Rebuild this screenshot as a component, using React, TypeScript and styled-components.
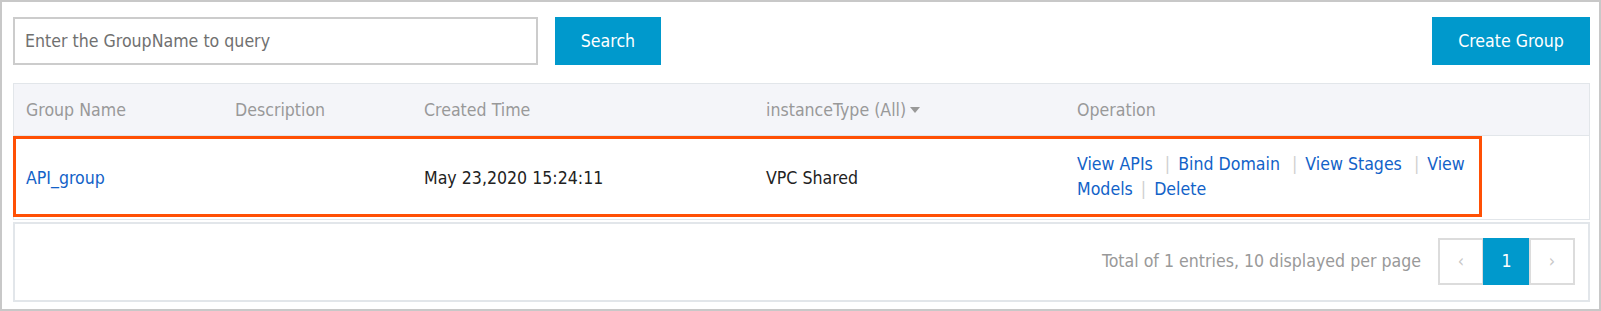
import React from 'react';
import styled, { createGlobalStyle } from 'styled-components';

const GlobalStyle = createGlobalStyle`
  body {
    margin: 0;
    font-family: "DejaVu Sans Condensed", "Liberation Sans", sans-serif;
    background: #fff;
  }
`;

const Frame = styled.div`
  box-sizing: border-box;
  width: 1601px;
  height: 311px;
  border: 2px solid #c8c8c8;
  padding: 15px 9px 0 11px;
  display: flex;
  flex-direction: column;
`;

const Toolbar = styled.div`
  display: flex;
  align-items: center;
  height: 48px;
`;

const SearchInput = styled.input`
  box-sizing: border-box;
  width: 525px;
  height: 48px;
  border: 2px solid #cccccc;
  padding: 0 10px;
  font-family: inherit;
  font-size: 17.6px;
  color: #333;
  outline: none;
  &::placeholder {
    color: #707070;
  }
`;

const Button = styled.button<{ $width: number; $push?: boolean }>`
  box-sizing: border-box;
  width: ${(p) => p.$width}px;
  height: 48px;
  margin-left: ${(p) => (p.$push ? 'auto' : '17px')};
  border: none;
  background: #0099cc;
  color: #fff;
  font-family: inherit;
  font-size: 17.6px;
  cursor: pointer;
`;

const Table = styled.div`
  margin-top: 18px;
  border: 1px solid #e2e6ea;
`;

const cols = '209px 189px 342px 311px 416px 1fr';

const HeaderRow = styled.div`
  display: grid;
  grid-template-columns: ${cols};
  height: 51px;
  background: #f4f5f9;
  border-bottom: 1px solid #e2e6ea;
  align-items: center;
`;

const HeadCell = styled.div`
  padding-left: 12px;
  font-size: 17.6px;
  color: #999;
  display: flex;
  align-items: center;
`;

const Caret = styled.span`
  width: 0;
  height: 0;
  margin-left: 4px;
  border-left: 5px solid transparent;
  border-right: 5px solid transparent;
  border-top: 6px solid #999;
`;

const BodyRow = styled.div`
  position: relative;
  display: grid;
  grid-template-columns: ${cols};
  height: 83px;
  align-items: center;
`;

const Cell = styled.div`
  padding-left: 12px;
  font-size: 17.6px;
  color: #222;
`;

const OpCell = styled(Cell)`
  line-height: 25px;
  padding-right: 2px;
  padding-bottom: 2px;
`;

const Link = styled.a`
  color: #1262c8;
  text-decoration: none;
  cursor: pointer;
`;

const Sep = styled.span<{ $wide?: boolean }>`
  color: #d0d0d0;
  margin: 0 8px 0 ${(p) => (p.$wide ? '12px' : '8px')};
`;

const Highlight = styled.div`
  position: absolute;
  left: -1px;
  top: 0;
  width: 1469px;
  height: 81px;
  box-sizing: border-box;
  border: 3px solid #ff5005;
  pointer-events: none;
`;

const Footer = styled.div`
  margin-top: 2px;
  height: 80px;
  box-sizing: border-box;
  border: 2px solid #e2e6ea;
  display: flex;
  align-items: center;
  justify-content: flex-end;
  padding: 0 13px 2px 0;
`;

const Summary = styled.span`
  font-size: 17.6px;
  color: #999;
  margin-right: 17px;
`;

const Pager = styled.div`
  display: flex;
`;

const PageBtn = styled.div<{ $active?: boolean }>`
  box-sizing: border-box;
  width: ${(p) => (p.$active ? '47px' : '46px')};
  height: 47px;
  display: flex;
  align-items: center;
  justify-content: center;
  border: 2px solid ${(p) => (p.$active ? '#0099cc' : '#dcdcdc')};
  background: ${(p) => (p.$active ? '#0099cc' : '#fff')};
  color: ${(p) => (p.$active ? '#fff' : '#c8c8c8')};
  font-size: 17.6px;
  & + & {
    margin-left: -1px;
  }
`;

const headers = ['Group Name', 'Description', 'Created Time'];

export default function App() {
  return (
    <>
      <GlobalStyle />
      <Frame>
        <Toolbar>
          <SearchInput placeholder="Enter the GroupName to query" />
          <Button $width={106}>Search</Button>
          <Button $width={158} $push>
            Create Group
          </Button>
        </Toolbar>
        <Table>
          <HeaderRow>
            {headers.map((h) => (
              <HeadCell key={h}>{h}</HeadCell>
            ))}
            <HeadCell>
              instanceType (All)
              <Caret />
            </HeadCell>
            <HeadCell>Operation</HeadCell>
            <HeadCell />
          </HeaderRow>
          <BodyRow>
            <Cell>
              <Link>API_group</Link>
            </Cell>
            <Cell />
            <Cell>May 23,2020 15:24:11</Cell>
            <Cell>VPC Shared</Cell>
            <OpCell>
              <Link>View APIs</Link>
              <Sep $wide>|</Sep>
              <Link>Bind Domain</Link>
              <Sep $wide>|</Sep>
              <Link>View Stages</Link>
              <Sep $wide>|</Sep>
              <Link>View Models</Link>
              <Sep>|</Sep>
              <Link>Delete</Link>
            </OpCell>
            <Cell />
            <Highlight />
          </BodyRow>
        </Table>
        <Footer>
          <Summary>Total of 1 entries, 10 displayed per page</Summary>
          <Pager>
            <PageBtn>‹</PageBtn>
            <PageBtn $active>1</PageBtn>
            <PageBtn>›</PageBtn>
          </Pager>
        </Footer>
      </Frame>
    </>
  );
}
